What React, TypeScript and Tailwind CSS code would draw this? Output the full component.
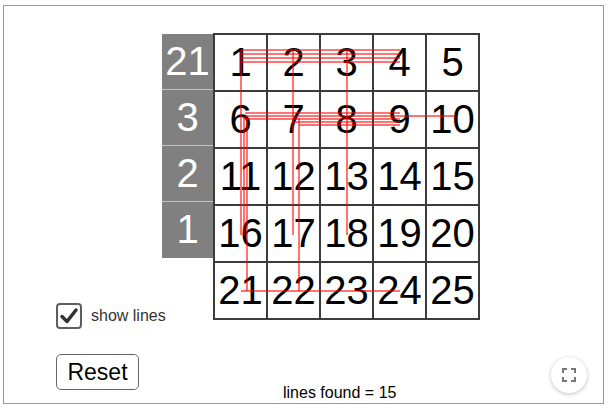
import React, { useState } from "react"

const labels = ["21", "3", "2", "1"]

// red connection lines, in px relative to the grid's top-left (page x-213, y-33)
const lines: [number, number, number, number][] = [
  // row 1
  [28, 17, 187, 17],
  [28, 21, 187, 21],
  [28, 25, 187, 25],
  [28, 29, 187, 29],
  // row 2
  [32, 80, 187, 80],
  [32, 83, 242, 83],
  [32, 86, 187, 86],
  [80, 89, 187, 89],
  [86, 92, 187, 92],
  // columns
  [28, 17, 28, 202],
  [31, 83, 31, 202],
  [34, 85, 34, 258],
  [80, 17, 80, 202],
  [86, 85, 86, 258],
  [134, 17, 134, 202],
  // row 5
  [28, 258, 187, 258],
]

function Grid({ show }: { show: boolean }) {
  return (
    <div className="relative">
      <div className="grid grid-cols-[repeat(5,51px)] auto-rows-[55px] gap-[2px] p-[2px] bg-[#3c3c3c]">
        {Array.from({ length: 25 }, (_, i) => (
          <div
            key={i}
            className="bg-white flex items-center justify-center pb-[2px] text-[40px] leading-none text-black"
          >
            {i + 1}
          </div>
        ))}
      </div>
      {show && (
        <svg className="absolute inset-0 pointer-events-none" width="267" height="287">
          {lines.map(([x1, y1, x2, y2], i) => (
            <line key={i} x1={x1} y1={y1} x2={x2} y2={y2} stroke="#ff0000" strokeOpacity="0.55" strokeWidth="2" />
          ))}
        </svg>
      )}
    </div>
  )
}

export default function App() {
  const [show, setShow] = useState(true)

  return (
    <div className="w-[607px] h-[409px] bg-white font-['Liberation_Sans',Arial,sans-serif] pt-[5px] pl-[3px]">
      <div className="w-[601px] h-[399px] border border-[#999] flex flex-col">
        <div className="flex pt-[27px]">
          {/* Left controls */}
          <div className="w-[158px] pl-[52px] pt-[270px]">
            <label className="flex items-center gap-[9px] whitespace-nowrap cursor-pointer" onClick={() => setShow(!show)}>
              <div className="shrink-0 w-[26px] h-[26px] rounded-[4px] border-2 border-[#5f5f5f] bg-white flex items-center justify-center">
                {show && (
                  <svg width="20" height="20" viewBox="0 0 20 20">
                    <path d="M3 10.5 L8 15.5 L17 4" fill="none" stroke="#333" strokeWidth="3.5" strokeLinecap="round" strokeLinejoin="round" />
                  </svg>
                )}
              </div>
              <span className="text-[16px] leading-[20px] text-[#333]">show lines</span>
            </label>
          </div>

          {/* Row labels */}
          <div className="w-[51px] mt-[1px] h-fit bg-[#808080] flex flex-col">
            {labels.map((l, i) => (
              <div
                key={i}
                className={`h-[56px] flex items-center justify-center pb-[2px] text-white text-[40px] leading-none ${i < 3 ? "border-b border-[#c4c4c4]" : ""}`}
              >
                {l}
              </div>
            ))}
          </div>

          <Grid show={show} />
        </div>

        {/* Bottom row */}
        <div className="flex items-start mt-[25px]">
          <button className="ml-[52px] w-[83px] h-[36px] rounded-[5px] border border-[#666] bg-white text-[23px] text-black leading-none">
            Reset
          </button>
          <div className="ml-[144px] mt-[29px] whitespace-nowrap text-[16px] text-black leading-[20px]">lines found = 15</div>
          <button className="ml-[155px] mt-[3px] w-[36px] h-[36px] rounded-full bg-white shadow-[0_1px_4px_rgba(0,0,0,0.25)] flex items-center justify-center">
            <svg width="14" height="14" viewBox="0 0 14 14" fill="none" stroke="#777" strokeWidth="2">
              <path d="M1 5 V1 H5" />
              <path d="M9 1 H13 V5" />
              <path d="M13 9 V13 H9" />
              <path d="M5 13 H1 V9" />
            </svg>
          </button>
        </div>
      </div>
    </div>
  )
}
